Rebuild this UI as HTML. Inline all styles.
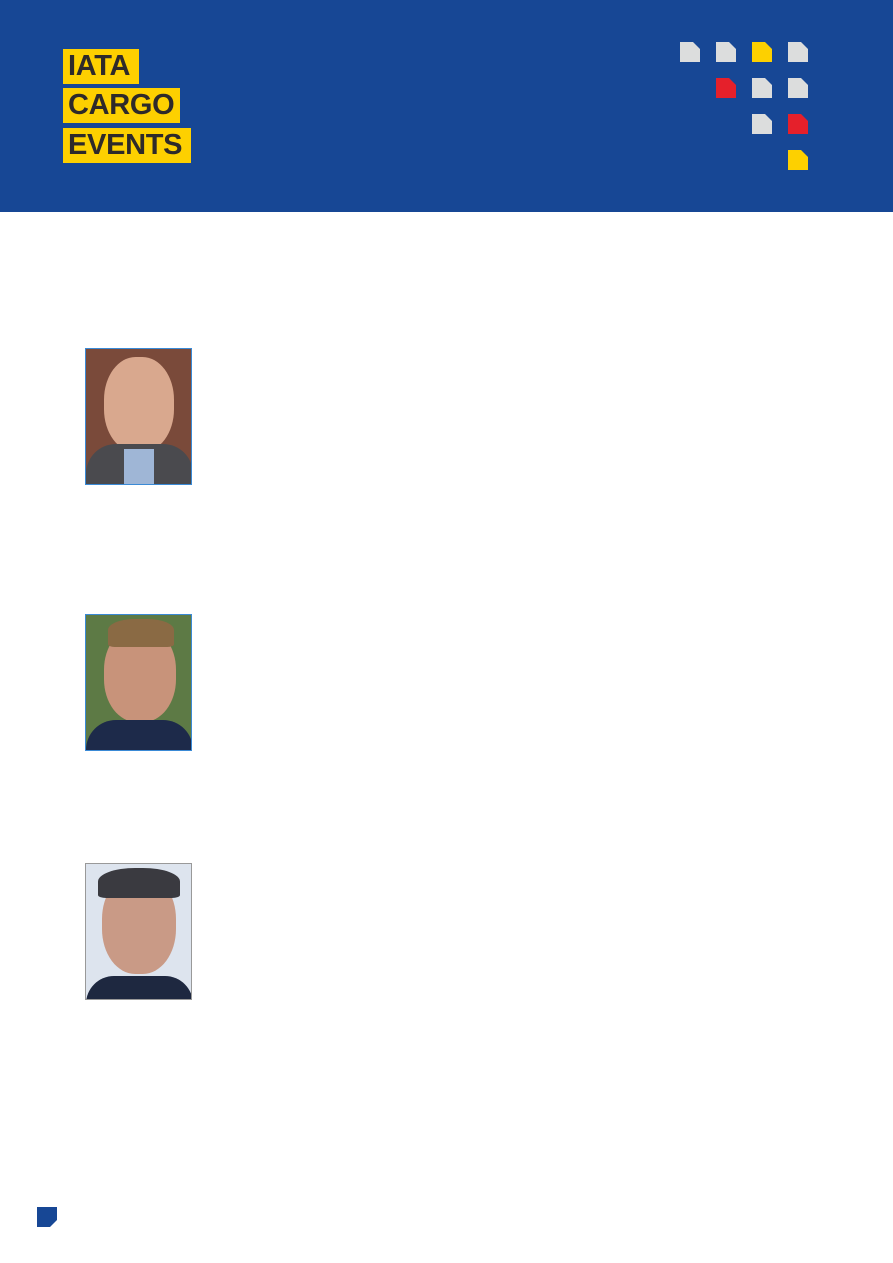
<!DOCTYPE html>
<html><head><meta charset="utf-8"><style>
*{margin:0;padding:0;box-sizing:border-box}
body{width:893px;height:1263px;background:#fff;position:relative;overflow:hidden;font-family:"Liberation Sans",sans-serif}
.hdr{position:absolute;left:0;top:0;width:893px;height:212px;background:#174795}
.lb{position:absolute;left:63px;height:35px;background:#fdd000;color:#2e2a2a;font-weight:bold;font-size:29px;line-height:35px;padding-left:5px;letter-spacing:-0.3px}
.sq{position:absolute;width:20px;height:20px;clip-path:polygon(0 0,65% 0,100% 35%,100% 100%,0 100%)}
.g{background:#dcdddd}.y{background:#fdd000}.r{background:#e5202b}
.ph{position:absolute;left:85px;width:107px;height:137px;border:1px solid #3a8ad6;overflow:hidden}
</style></head><body>
<div class="hdr">
<div class="lb" style="top:49px;width:76px">IATA</div>
<div class="lb" style="top:88px;width:117px">CARGO</div>
<div class="lb" style="top:128px;width:128px">EVENTS</div>
<div class="sq g" style="left:680px;top:42px"></div>
<div class="sq g" style="left:716px;top:42px"></div>
<div class="sq y" style="left:752px;top:42px"></div>
<div class="sq g" style="left:788px;top:42px"></div>
<div class="sq r" style="left:716px;top:78px"></div>
<div class="sq g" style="left:752px;top:78px"></div>
<div class="sq g" style="left:788px;top:78px"></div>
<div class="sq g" style="left:752px;top:114px"></div>
<div class="sq r" style="left:788px;top:114px"></div>
<div class="sq y" style="left:788px;top:150px"></div>
</div>
<div class="ph" style="top:348px;background:#7a4a3a">
<div style="position:absolute;left:18px;top:8px;width:70px;height:95px;border-radius:45%;background:#d9a88e"></div>
<div style="position:absolute;left:0;top:95px;width:107px;height:45px;background:#4a4a4e;border-radius:30px 30px 0 0"></div>
<div style="position:absolute;left:38px;top:100px;width:30px;height:40px;background:#9fb6d6"></div>
</div>
<div class="ph" style="top:614px;background:#5d7a45">
<div style="position:absolute;left:18px;top:12px;width:72px;height:95px;border-radius:45%;background:#c8937a"></div>
<div style="position:absolute;left:22px;top:4px;width:66px;height:28px;border-radius:40% 40% 10% 10%;background:#8a6a44"></div>
<div style="position:absolute;left:0;top:105px;width:107px;height:35px;background:#1d2a4a;border-radius:30px 30px 0 0"></div>
</div>
<div class="ph" style="top:863px;background:#dde4ee;border-color:#999">
<div style="position:absolute;left:16px;top:10px;width:74px;height:100px;border-radius:45%;background:#c99a86"></div>
<div style="position:absolute;left:12px;top:4px;width:82px;height:30px;border-radius:45% 45% 10% 10%;background:#3a3a40"></div>
<div style="position:absolute;left:0;top:112px;width:107px;height:28px;background:#1e2840;border-radius:30px 30px 0 0"></div>
</div>
<div style="position:absolute;left:37px;top:1207px;width:20px;height:20px;background:#174795;clip-path:polygon(0 0,100% 0,100% 65%,65% 100%,0 100%)"></div>
</body></html>
